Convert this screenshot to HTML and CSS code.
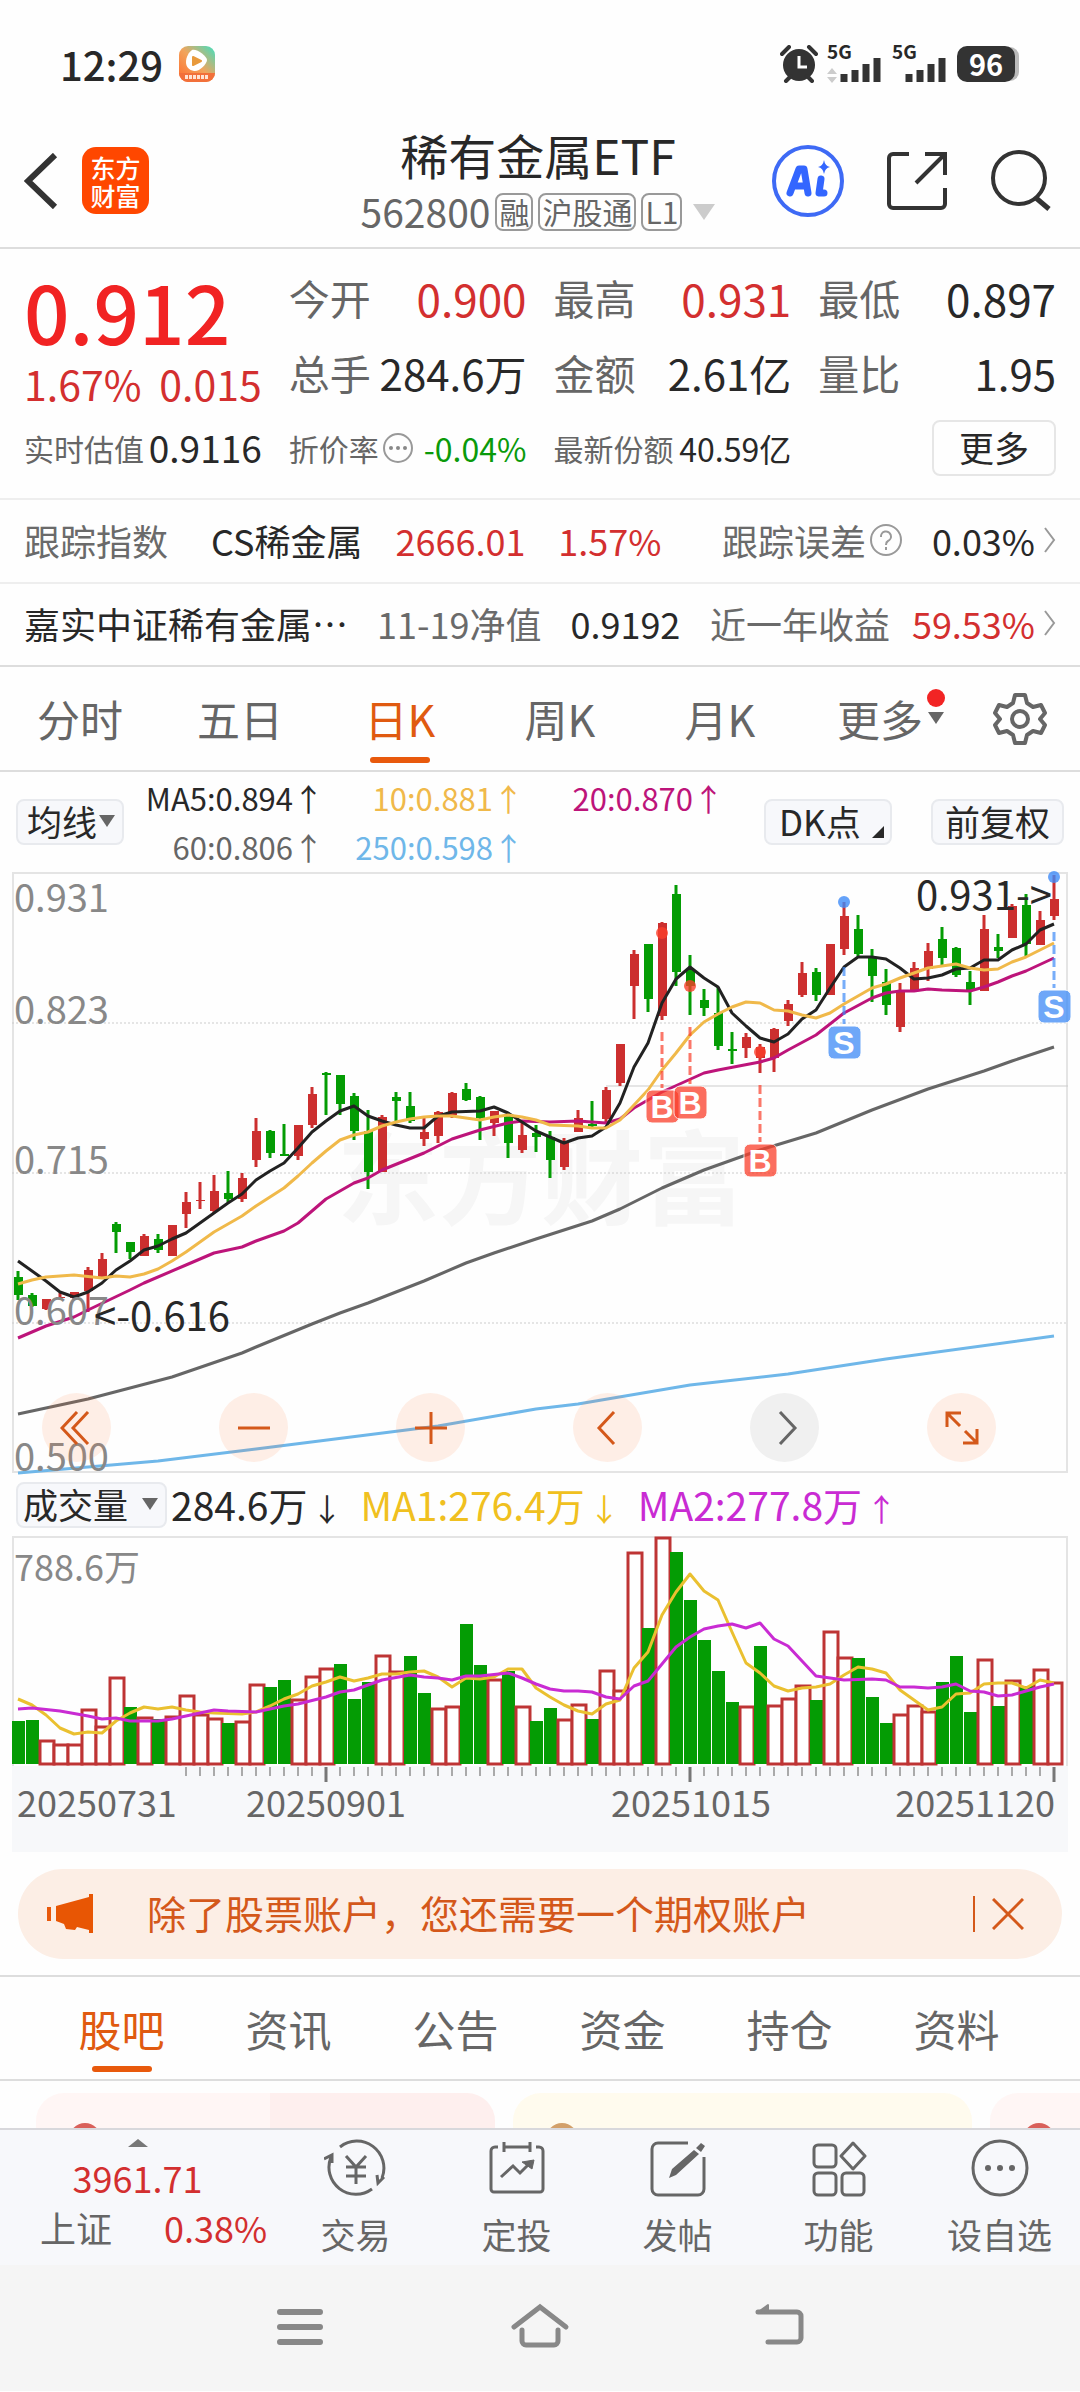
FILE: index.html
```html
<!DOCTYPE html>
<html lang="zh-CN">
<head>
    <meta charset="UTF-8">
    <meta name="viewport" content="width=device-width, initial-scale=1.0">
    <title>稀有金属ETF 562800</title>
    <link rel="stylesheet" href="styles.css">
</head>
<body>

<div class="status-bar">
    <div class="status-left">
        <span class="clock">12:29</span>
        <svg class="status-app" width="36" height="36" viewBox="0 0 36 36">
            <defs>
                <linearGradient id="appBg" x1="0" y1="1" x2="1" y2="0">
                    <stop offset="0" stop-color="#ff6a2b"/>
                    <stop offset="0.5" stop-color="#f2a45c"/>
                    <stop offset="1" stop-color="#3fe0c0"/>
                </linearGradient>
            </defs>
            <rect width="36" height="36" rx="9" fill="url(#appBg)"/>
            <path d="M0 27h36a9 9 0 0 1-9 9H9a9 9 0 0 1-9-9z" fill="#f2703a"/>
            <path d="M13 4c4-2 15 6 15 10s-8 12-13 11-8-4-8-9 3-10 6-12z" fill="#fff"/>
            <path d="M14 11l8 4-8 4z" fill="#e89a3c" stroke="#e89a3c" stroke-width="2" stroke-linejoin="round"/>
            <path d="M6 31h24" stroke="#ffe3d3" stroke-width="4" stroke-dasharray="3 1"/>
        </svg>
    </div>
    <div class="status-right">
        <svg width="38" height="38" viewBox="0 0 38 38">
            <circle cx="19" cy="20" r="16" fill="#333"/>
            <path d="M2 9l7-7M36 9l-7-7M6 36l5-5M32 36l-5-5" stroke="#333" stroke-width="4" stroke-linecap="round"/>
            <path d="M19 11v11h8" stroke="#fff" stroke-width="3" fill="none"/>
        </svg>
        <div class="signal">
            <span class="net">5G</span>
            <svg width="56" height="38" viewBox="0 0 56 38">
                <path d="M0 29l5-6 5 6zM0 32l5 6 5-6z" fill="#ccc"/>
                <path d="M17 37v-8M28 37v-12M39 37v-18M50 37v-24" stroke="#333" stroke-width="7"/>
            </svg>
        </div>
        <div class="signal">
            <span class="net">5G</span>
            <svg width="56" height="38" viewBox="0 0 56 38">
                <path d="M17 37v-8M28 37v-12M39 37v-18M50 37v-24" stroke="#333" stroke-width="7"/>
            </svg>
        </div>
        <span class="battery">96</span>
    </div>
</div>

<header class="header">
    <div class="header-side">
        <button class="icon-btn" aria-label="返回">
            <svg width="34" height="56" viewBox="0 0 34 56"><path d="M31 2L4 28l27 26" fill="none" stroke="#333" stroke-width="6"/></svg>
        </button>
        <a class="brand" href="#"><span>东方</span><span>财富</span></a>
    </div>
    <div class="header-title">
        <h1>稀有金属ETF</h1>
        <div class="sub">
            <span class="code">562800</span>
            <span class="tag">融</span>
            <span class="tag">沪股通</span>
            <span class="tag">L1</span>
            <svg width="22" height="16" viewBox="0 0 22 16"><path d="M0 0h22L11 16z" fill="#ccc"/></svg>
        </div>
    </div>
    <div class="header-side header-tools">
        <button class="icon-btn" aria-label="AI">
            <svg width="72" height="72" viewBox="0 0 72 72">
                <circle cx="36" cy="36" r="34" fill="#fff" stroke="#3e6af5" stroke-width="4"/>
                <path d="M18 48l9-24h5l4 24M22 41h12" fill="none" stroke="#3366ff" stroke-width="7" stroke-linejoin="round" stroke-linecap="round"/>
                <path d="M49 34l-2 14h5" fill="none" stroke="#3366ff" stroke-width="7" stroke-linecap="round" stroke-linejoin="round"/>
                <path d="M52 15q1 6 6 7-5 1-6 7-1-6-6-7 5-1 6-7z" fill="#3366ff"/>
            </svg>
        </button>
        <button class="icon-btn" aria-label="分享">
            <svg width="60" height="60" viewBox="0 0 60 60">
                <path d="M22 3H6a4 4 0 0 0-4 4v46a4 4 0 0 0 4 4h48a4 4 0 0 0 4-4V37" fill="none" stroke="#333" stroke-width="4"/>
                <path d="M29 32L57 4M38 3h20v21" fill="none" stroke="#333" stroke-width="4"/>
            </svg>
        </button>
        <button class="icon-btn" aria-label="搜索">
            <svg width="62" height="62" viewBox="0 0 62 62">
                <circle cx="29" cy="28" r="26" fill="none" stroke="#333" stroke-width="4"/>
                <path d="M46 48l13 11" stroke="#333" stroke-width="5"/>
            </svg>
        </button>
    </div>
</header>

<section class="quote">
    <div class="price-box">
        <div class="price">0.912</div>
        <div class="change"><span>1.67%</span><span>0.015</span></div>
    </div>
    <div class="cell"><span class="label">今开</span><span class="value up">0.900</span></div>
    <div class="cell"><span class="label">最高</span><span class="value up">0.931</span></div>
    <div class="cell"><span class="label">最低</span><span class="value">0.897</span></div>
    <div class="cell"><span class="label">总手</span><span class="value mid">284.6万</span></div>
    <div class="cell"><span class="label">金额</span><span class="value mid">2.61亿</span></div>
    <div class="cell"><span class="label">量比</span><span class="value mid">1.95</span></div>
    <div class="cell small"><span class="label">实时估值</span><span class="value big">0.9116</span></div>
    <div class="cell small">
        <span class="label rate">折价率
            <svg width="32" height="32" viewBox="0 0 32 32">
                <circle cx="16" cy="16" r="14" fill="none" stroke="#999" stroke-width="2"/>
                <circle cx="9" cy="16" r="2" fill="#888"/><circle cx="16" cy="16" r="2" fill="#888"/><circle cx="23" cy="16" r="2" fill="#888"/>
            </svg>
        </span>
        <span class="value down">-0.04%</span>
    </div>
    <div class="cell small"><span class="label">最新份额</span><span class="value">40.59亿</span></div>
    <div class="cell more"><button class="more-btn">更多</button></div>
</section>

<a class="info-row" href="#">
    <span class="muted name">跟踪指数</span>
    <span>CS稀金属</span>
    <span class="up">2666.01</span>
    <span class="up">1.57%</span>
    <span class="muted push">跟踪误差</span>
    <svg class="help" width="34" height="34" viewBox="0 0 34 34">
        <circle cx="17" cy="17" r="15" fill="none" stroke="#999" stroke-width="2"/>
        <path d="M12 14a5 5 0 1 1 7 4q-2 1-2 4M17 24v3" fill="none" stroke="#999" stroke-width="2"/>
    </svg>
    <span class="last">0.03%</span>
    <svg class="chev" width="12" height="26" viewBox="0 0 12 26"><path d="M1 1l9 12-9 12" fill="none" stroke="#999" stroke-width="2"/></svg>
</a>
<a class="info-row fund" href="#">
    <span>嘉实中证稀有金属⋯</span>
    <span class="muted">11-19净值</span>
    <span>0.9192</span>
    <span class="muted push">近一年收益</span>
    <span class="up last">59.53%</span>
    <svg class="chev" width="12" height="26" viewBox="0 0 12 26"><path d="M1 1l9 12-9 12" fill="none" stroke="#999" stroke-width="2"/></svg>
</a>

<nav class="period-tabs">
    <button class="tab">分时</button>
    <button class="tab">五日</button>
    <button class="tab active">日K</button>
    <button class="tab">周K</button>
    <button class="tab">月K</button>
    <button class="tab">更多<span class="dot"></span><span class="caret"></span></button>
    <button class="tab gear" aria-label="设置">
        <svg width="54" height="54" viewBox="0 0 54 54">
            <path d="M22 3h10l2 8 6 4 8-2 4 8-5 6 5 6-4 8-8-2-6 4-2 8H22l-2-8-6-4-8 2-4-8 5-6-5-6 4-8 8 2 6-4z" fill="none" stroke="#666" stroke-width="4" stroke-linejoin="round"/>
            <circle cx="27" cy="27" r="8" fill="none" stroke="#666" stroke-width="4"/>
        </svg>
    </button>
</nav>

<div class="ma-bar">
    <button class="chip">均线<span class="caret"></span></button>
    <div class="ma-list">
        <span class="ma5">MA5:0.894↑</span>
        <span class="ma10">10:0.881↑</span>
        <span class="ma20">20:0.870↑</span>
        <span class="ma60">60:0.806↑</span>
        <span class="ma250">250:0.598↑</span>
    </div>
    <button class="chip dk">DK点<span class="corner"></span></button>
    <button class="chip adjust">前复权</button>
</div>

<div class="kline">
    <svg id="kline" viewBox="0 0 1056 600"></svg>
    <div class="kline-tools">
        <button class="round" aria-label="最早">
            <svg width="34" height="34" viewBox="0 0 34 34"><path d="M17 1L2 17l15 16M28 1L13 17l15 16" fill="none" stroke="#d4581a" stroke-width="3"/></svg>
        </button>
        <button class="round" aria-label="缩小">
            <svg width="34" height="34" viewBox="0 0 34 34"><path d="M1 17h32" stroke="#d4581a" stroke-width="3"/></svg>
        </button>
        <button class="round" aria-label="放大">
            <svg width="34" height="34" viewBox="0 0 34 34"><path d="M1 17h32M17 1v32" stroke="#d4581a" stroke-width="3"/></svg>
        </button>
        <button class="round" aria-label="左移">
            <svg width="34" height="34" viewBox="0 0 34 34"><path d="M23 1L8 17l15 16" fill="none" stroke="#d4581a" stroke-width="3"/></svg>
        </button>
        <button class="round grey" aria-label="右移">
            <svg width="34" height="34" viewBox="0 0 34 34"><path d="M12 1l15 16-15 16" fill="none" stroke="#666" stroke-width="3"/></svg>
        </button>
        <button class="round" aria-label="全屏">
            <svg width="34" height="34" viewBox="0 0 34 34"><path d="M2 16V2h14M2 2l13 13M32 18v14H18M32 32L20 20" fill="none" stroke="#d4581a" stroke-width="3"/></svg>
        </button>
    </div>
</div>

<div class="vol-bar">
    <button class="chip">成交量<span class="caret"></span></button>
    <span class="vol-now">284.6万<span class="arrow">↓</span></span>
    <span class="vol-ma1">MA1:276.4万<span class="arrow">↓</span></span>
    <span class="vol-ma2">MA2:277.8万<span class="arrow">↑</span></span>
</div>

<div class="volume">
    <svg id="volume" viewBox="0 0 1056 316"></svg>
</div>

<div class="notice">
    <svg width="48" height="40" viewBox="0 0 48 40">
        <path d="M2 13v14" stroke="#e8590c" stroke-width="4"/>
        <path d="M9 12L42 3V0h4v39h-4v-3l-12-3-2 3-9-1-2-5-8-3z" fill="#e85604"/>
    </svg>
    <a class="notice-text" href="#">除了股票账户，您还需要一个期权账户</a>
    <button class="close" aria-label="关闭">
        <svg width="32" height="32" viewBox="0 0 32 32"><path d="M1 1l30 30M31 1L1 31" stroke="#d4581a" stroke-width="3"/></svg>
    </button>
</div>

<nav class="section-tabs">
    <button class="tab active">股吧</button>
    <button class="tab">资讯</button>
    <button class="tab">公告</button>
    <button class="tab">资金</button>
    <button class="tab">持仓</button>
    <button class="tab">资料</button>
</nav>

<div class="cards">
    <div class="card pink"><i class="medal red"></i><b>大有机会</b></div>
    <div class="card cream"><i class="medal gold"></i><b>上市公司</b></div>
    <div class="card pale"><i class="medal red"></i></div>
</div>

<footer class="bottom-bar">
    <a class="market" href="#">
        <svg width="20" height="8" viewBox="0 0 20 8"><path d="M0 8L10 0l10 8z" fill="#777"/></svg>
        <span class="up">3961.71</span>
        <span class="market-row"><span>上证</span><span class="up">0.38%</span></span>
    </a>
    <a class="action" href="#">
        <svg width="64" height="58" viewBox="0 0 64 58" fill="none" stroke="#666" stroke-width="3">
            <path d="M16 8a27 27 0 0 1 42 31M60 38l-6 6-1-8M48 50A27 27 0 0 1 7 18M0 20l8-4v8"/>
            <path d="M22 17l10 11 10-11M22 28h20M22 37h20M32 28v17"/>
        </svg>
        <span>交易</span>
    </a>
    <a class="action" href="#">
        <svg width="56" height="58" viewBox="0 0 56 58" fill="none" stroke="#666" stroke-width="3">
            <path d="M9 8H6a4 4 0 0 0-4 4v38a3 3 0 0 0 3 3h46a3 3 0 0 0 3-3V12a4 4 0 0 0-4-4h-3M15 3v10M41 3v10M15 8h26"/>
            <path d="M12 38l12-11 7 7 12-12"/>
            <path d="M33 23l12-2-2 9z" fill="#666" stroke-width="1"/>
        </svg>
        <span>定投</span>
    </a>
    <a class="action" href="#">
        <svg width="56" height="58" viewBox="0 0 56 58" fill="none" stroke="#666" stroke-width="3">
            <path d="M38 4H8a6 6 0 0 0-6 6v40a6 6 0 0 0 6 6h40a6 6 0 0 0 6-6V18"/>
            <path d="M19 39l3-9L44 11l5 4-23 21zM46 9l5-5 4 3-4 6z" fill="#666" stroke="none"/>
        </svg>
        <span>发帖</span>
    </a>
    <a class="action" href="#">
        <svg width="56" height="58" viewBox="0 0 56 58" fill="none" stroke="#666" stroke-width="3">
            <rect x="3" y="6" width="22" height="22" rx="4"/>
            <rect x="3" y="34" width="22" height="22" rx="4"/>
            <rect x="31" y="34" width="22" height="22" rx="4"/>
            <path d="M42 4l12 13-12 13-12-13z" stroke-linejoin="round"/>
        </svg>
        <span>功能</span>
    </a>
    <a class="action" href="#">
        <svg width="58" height="58" viewBox="0 0 58 58">
            <circle cx="29" cy="29" r="27" fill="none" stroke="#666" stroke-width="3"/>
            <circle cx="17" cy="29" r="3" fill="#666"/><circle cx="29" cy="29" r="3" fill="#666"/><circle cx="41" cy="29" r="3" fill="#666"/>
        </svg>
        <span>设自选</span>
    </a>
</footer>

<div class="system-nav">
    <button class="icon-btn" aria-label="菜单">
        <svg width="60" height="48" viewBox="0 0 60 48"><path d="M10 9h40M10 24h40M10 39h40" stroke="#888" stroke-width="6" stroke-linecap="round"/></svg>
    </button>
    <button class="icon-btn" aria-label="主页">
        <svg width="60" height="48" viewBox="0 0 60 48"><path d="M4 24L30 4l26 20M12 27v11a4 4 0 0 0 4 4h28a4 4 0 0 0 4-4V27" fill="none" stroke="#888" stroke-width="5" stroke-linecap="round"/></svg>
    </button>
    <button class="icon-btn" aria-label="返回上级">
        <svg width="60" height="48" viewBox="0 0 60 48"><path d="M8 9h39a4 4 0 0 1 4 4v22a4 4 0 0 1-4 4H18" fill="none" stroke="#888" stroke-width="5" stroke-linecap="round"/><path d="M7 10l11-8v7z" fill="#888" stroke="#888" stroke-width="2" stroke-linejoin="round"/></svg>
    </button>
</div>

<script src="chart.js"></script>
</body>
</html>
```
FILE: styles.css
```css
* {
    box-sizing: border-box;
}
body {
    margin: 0;
    background-color: #fefefe;
    color: #282828;
    font-family: "Noto Sans CJK SC", sans-serif;
    font-size: 36px;
    line-height: 1;
}
button {
    margin: 0;
    padding: 0;
    border: none;
    background: none;
    font: inherit;
    color: inherit;
}
a {
    color: inherit;
    text-decoration: none;
}
svg {
    display: block;
    flex: none;
}
.up {
    color: #d32f2f;
}
.down {
    color: #0a9a0a;
}
.muted {
    color: #6a6a6a;
}

/* status bar */
.status-bar {
    display: flex;
    justify-content: space-between;
    align-items: center;
    height: 114px;
    padding: 14px 65px 0 60px;
}
.status-left,
.status-right {
    display: flex;
    align-items: center;
}
.status-left {
    gap: 16px;
}
.clock {
    font-size: 40px;
    font-weight: 500;
}
.status-right {
    gap: 9px;
}
.signal {
    position: relative;
}
.net {
    position: absolute;
    top: -4px;
    left: 0;
    font-size: 19px;
    font-weight: bold;
}
.battery {
    width: 58px;
    height: 36px;
    border-radius: 10px;
    background-color: #333;
    box-shadow: 5px 0 0 -1px #bbb;
    color: #fff;
    font-size: 29px;
    font-weight: bold;
    line-height: 34px;
    text-align: center;
}

/* header */
.header {
    display: grid;
    grid-template-columns: 1fr auto 1fr;
    align-items: center;
    height: 135px;
    padding: 0 28px 0 24px;
    border-bottom: 2px solid #ddd;
}
.header-side {
    display: flex;
    align-items: center;
    gap: 24px;
}
.header-tools {
    justify-content: flex-end;
    gap: 43px;
}
.brand {
    display: flex;
    flex-direction: column;
    justify-content: center;
    align-items: center;
    width: 67px;
    height: 67px;
    border-radius: 14px;
    background-color: #ff4700;
    color: #fff;
    font-size: 25px;
    font-weight: 500;
    line-height: 28px;
}
.header-title {
    display: flex;
    flex-direction: column;
    align-items: center;
    gap: 14px;
}
h1 {
    margin: 0;
    font-size: 48px;
    font-weight: normal;
}
.sub {
    display: flex;
    align-items: center;
    gap: 5px;
    color: #666;
}
.code {
    font-size: 39px;
}
.tag {
    padding: 1px 2px 3px;
    border: 2px solid #999;
    border-radius: 8px;
    font-size: 30px;
}
.sub svg {
    margin-left: 6px;
}

/* quote */
.quote {
    display: grid;
    grid-template-columns: repeat(4, 1fr);
    grid-template-rows: 75px 75px 75px;
    column-gap: 27px;
    height: 251px;
    padding: 11px 24px 0;
    border-bottom: 2px solid #eee;
}
.price-box {
    grid-row: span 2;
    display: flex;
    flex-direction: column;
    justify-content: space-between;
    padding: 10px 0 6px;
}
.price {
    color: #f12323;
    font-size: 80px;
    font-weight: 500;
}
.change {
    display: flex;
    justify-content: space-between;
    color: #d32f2f;
    font-size: 41px;
}
.cell {
    display: flex;
    justify-content: space-between;
    align-items: center;
    white-space: nowrap;
}
.label {
    color: #666;
    font-size: 41px;
}
.value {
    font-size: 44px;
}
.value.mid {
    font-size: 42px;
}
.small .label {
    font-size: 30px;
}
.small .value {
    font-size: 32px;
}
.small .value.big {
    font-size: 37px;
}
.rate {
    display: flex;
    align-items: center;
    gap: 3px;
}
.cell.more {
    justify-content: flex-end;
}
.more-btn {
    width: 124px;
    height: 56px;
    padding-bottom: 2px;
    border: 2px solid #e6e6e6;
    border-radius: 8px;
    font-size: 35px;
}

/* index rows */
.info-row {
    display: flex;
    align-items: center;
    gap: 33px;
    height: 84px;
    padding: 0 24px 3px;
    border-bottom: 2px solid #eee;
    white-space: nowrap;
}
.info-row .name {
    margin-right: 10px;
}
.push {
    margin-left: auto;
}
.help {
    margin-left: -30px;
}
.last {
    margin-left: -4px;
}
.chev {
    margin-left: -24px;
}
.info-row.fund {
    gap: 29px;
    height: 83px;
    border-bottom-color: #ddd;
}
.fund .last {
    margin-left: -7px;
}
.fund .chev {
    margin-left: -20px;
}

/* tabs */
.period-tabs,
.section-tabs {
    display: flex;
    border-bottom: 2px solid #ddd;
    color: #666;
}
.period-tabs {
    height: 105px;
}
.tab {
    position: relative;
    flex: 4;
    font-size: 43px;
}
.tab.gear {
    flex: 3;
    display: flex;
    justify-content: center;
    align-items: center;
}
.tab.active {
    color: #e05a10;
}
.tab.active::after {
    content: "";
    position: absolute;
    bottom: 7px;
    left: calc(50% - 30px);
    width: 60px;
    height: 6px;
    border-radius: 3px;
    background-color: #e8590c;
}
.tab .dot {
    position: absolute;
    top: 22px;
    right: 15px;
    width: 18px;
    height: 18px;
    border-radius: 50%;
    background-color: #f22424;
}
.tab .caret {
    position: absolute;
    top: 45px;
    right: 16px;
}
.caret {
    width: 0;
    height: 0;
    border: 8px solid transparent;
    border-top: 12px solid #666;
    border-bottom: 0;
}

/* moving averages */
.ma-bar {
    display: flex;
    align-items: center;
    height: 101px;
    padding: 0 16px 2px;
}
.chip {
    display: flex;
    align-items: center;
    gap: 2px;
    height: 46px;
    padding: 0 7px 2px 9px;
    border: 2px solid #e8eaee;
    border-radius: 8px;
    background-color: #f7f8fb;
    font-size: 35px;
    white-space: nowrap;
}
.chip.dk {
    position: relative;
    width: 128px;
    margin: 0 39px 0 auto;
    padding-left: 13px;
}
.chip.adjust {
    padding: 0 12px 2px;
}
.corner {
    position: absolute;
    right: 6px;
    bottom: 5px;
    border-left: 12px solid transparent;
    border-bottom: 12px solid #282828;
}
.ma-list {
    display: grid;
    grid-template-columns: repeat(3, 200px);
    row-gap: 18px;
    font-size: 31px;
    text-align: right;
}
.ma10 {
    color: #f0b94a;
}
.ma20 {
    color: #bd147a;
}
.ma60 {
    color: #666;
}
.ma250 {
    color: #6fb7e9;
}

/* k line */
.kline {
    position: relative;
    margin: 0 12px;
}
#kline,
#volume {
    width: 100%;
    overflow: visible;
}
.kline-tools {
    position: absolute;
    right: 72px;
    bottom: 11px;
    left: 30px;
    display: flex;
    justify-content: space-between;
}
.round {
    display: flex;
    justify-content: center;
    align-items: center;
    width: 69px;
    height: 69px;
    border-radius: 50%;
    background-color: rgba(255, 122, 60, 0.12);
}
.round.grey {
    background-color: rgba(120, 120, 120, 0.1);
}
.axis-text {
    fill: #888;
    font-size: 38px;
}
.volume .axis-text {
    font-size: 36px;
}
.mark-text {
    fill: #282828;
    font-size: 40px;
}
.date-text {
    fill: #666;
    font-size: 36px;
}
.watermark {
    fill: #f6f6f6;
    font-size: 102px;
    font-weight: bold;
}
.badge-text {
    fill: #fff;
    font-family: "Liberation Sans", sans-serif;
    font-size: 32px;
    font-weight: bold;
    text-anchor: middle;
}

/* volume */
.vol-bar {
    display: flex;
    align-items: center;
    height: 63px;
    padding: 0 16px;
    font-size: 39px;
    white-space: nowrap;
}
.vol-bar .chip {
    gap: 14px;
    margin-right: 4px;
    padding: 0 7px 2px 5px;
}
.arrow {
    margin: 0 4px;
    font-size: 31px;
}
.vol-ma1 {
    margin: 0 14px;
    color: #f0c020;
}
.vol-ma2 {
    color: #c92bd3;
}
.volume {
    margin: 0 12px;
}

/* notice */
.notice {
    display: flex;
    align-items: center;
    height: 90px;
    margin: 17px 18px 16px;
    padding: 0 38px 0 29px;
    border-radius: 45px;
    background-color: #fceee5;
    color: #d4581a;
}
.notice-text {
    flex: 1;
    margin-left: 52px;
    padding-bottom: 3px;
    font-size: 39px;
}
.close {
    padding: 2px 0 2px 17px;
    border-left: 2px solid #d4581a;
}

/* section tabs */
.section-tabs {
    height: 106px;
    padding: 0 40px 0 38px;
    border-top: 2px solid #ddd;
}

/* cards */
.cards {
    display: grid;
    grid-template-columns: 459px 459px 459px;
    gap: 18px;
    height: 47px;
    padding: 12px 36px 0;
    overflow: hidden;
}
.card {
    display: flex;
    align-items: flex-start;
    height: 120px;
    border-radius: 28px;
    padding: 30px 33px;
}
.card b {
    margin: 3px 0 0 30px;
    font-size: 36px;
}
.card.pink {
    background-image: linear-gradient(90deg, #fff6f5 51%, #feefee 51%);
}
.card.pink b {
    margin-left: 106px;
}
.card.cream {
    background-color: #fffbee;
}
.card.pale {
    background-color: #fff6f5;
}
.medal {
    width: 32px;
    height: 32px;
    border-radius: 50%;
}
.medal.red {
    background-color: #d9605a;
}
.medal.gold {
    background-color: #d2a06a;
}

/* bottom bar */
.bottom-bar {
    display: flex;
    height: 137px;
    border-top: 2px solid #d8d8dc;
    background-color: #f7f8fb;
    color: #666;
}
.market {
    display: flex;
    flex: 275;
    flex-direction: column;
    align-items: center;
    padding-top: 9px;
}
.market > .up {
    margin: 12px 0 14px;
}
.market-row {
    display: flex;
    gap: 52px;
    padding-left: 32px;
}
.action {
    display: flex;
    flex: 161;
    flex-direction: column;
    align-items: center;
    gap: 19px;
    padding-top: 9px;
    font-size: 35px;
}

/* system navigation */
.system-nav {
    display: flex;
    justify-content: center;
    gap: 180px;
    height: 126px;
    padding-top: 38px;
    background-color: #f5f5f5;
}
.icon-btn {
    display: block;
    height: max-content;
}
```
FILE: chart.js
```js
const RED = '#cc2f2f';
const GREEN = '#049c04';

// colour, high, body top, body bottom, low
const candles = [
    ['g', 398, 404, 422, 427], ['g', 420, 422, 433, 434], ['r', 426, 426, 436, 437], ['r', 420, 424, 425, 427], ['r', 419, 419, 425, 427],
    ['r', 394, 397, 418, 439], ['r', 380, 386, 404, 404], ['g', 349, 351, 359, 380], ['g', 369, 369, 379, 386], ['r', 361, 363, 383, 383],
    ['g', 361, 366, 377, 380], ['r', 352, 352, 383, 383], ['r', 319, 329, 341, 355], ['r', 309, 327, 328, 336], ['r', 302, 318, 338, 340],
    ['g', 298, 320, 326, 329], ['r', 300, 305, 326, 329], ['r', 245, 258, 287, 294], ['g', 257, 258, 280, 285], ['g', 251, 281, 283, 283],
    ['r', 252, 252, 283, 287], ['r', 214, 221, 252, 255], ['g', 199, 200, 202, 242], ['g', 202, 202, 231, 242], ['g', 220, 223, 258, 267],
    ['g', 237, 258, 299, 316], ['r', 242, 244, 299, 299], ['g', 219, 224, 228, 250], ['g', 219, 233, 248, 250], ['r', 244, 259, 266, 273],
    ['r', 238, 239, 263, 270], ['r', 219, 220, 242, 245], ['g', 210, 216, 227, 228], ['g', 223, 224, 245, 267], ['r', 238, 238, 250, 263],
    ['g', 239, 242, 270, 285], ['r', 249, 262, 277, 280], ['g', 252, 260, 264, 279], ['g', 258, 264, 287, 305], ['r', 265, 270, 294, 297],
    ['r', 237, 245, 259, 259], ['g', 228, 251, 253, 254], ['r', 214, 217, 246, 249], ['r', 171, 171, 210, 213], ['r', 77, 81, 113, 146],
    ['g', 71, 71, 126, 139], ['r', 49, 50, 143, 147], ['g', 12, 21, 99, 113], ['g', 82, 96, 113, 142], ['g', 116, 127, 135, 143],
    ['g', 114, 140, 173, 177], ['g', 159, 176, 178, 191], ['r', 160, 164, 175, 185], ['r', 171, 174, 185, 200], ['r', 155, 156, 185, 199],
    ['r', 127, 131, 148, 153], ['r', 89, 100, 122, 124], ['g', 95, 99, 122, 128], ['r', 71, 71, 122, 122], ['r', 29, 43, 76, 82],
    ['g', 42, 56, 81, 83], ['g', 76, 84, 103, 129], ['g', 96, 109, 132, 142], ['r', 110, 118, 154, 159], ['r', 89, 95, 118, 118],
    ['r', 70, 78, 96, 108], ['g', 54, 66, 85, 92], ['g', 74, 75, 102, 104], ['g', 98, 109, 118, 132], ['r', 42, 56, 118, 118],
    ['g', 61, 74, 78, 85], ['r', 31, 33, 65, 65], ['g', 21, 32, 71, 84], ['r', 38, 47, 72, 72], ['r', 2, 26, 43, 47]
];

// moving averages as day:y pairs
const lines = [
    ['#6fb7e9', '0:600 10:588 17:576 30:553 37:536 40:531 48:512 55:501 62:486 74:463'],
    ['#666', '0:541 5:526 11:504 16:480 17:474 21:451 23:440 25:430 29:408 32:390 34:380 37:366 41:348 43:336 46:315 49:297 53:277 57:260 61:237 65:216 69:198 71:188 74:174'],
    ['#bd147a', '0:465 2:453 4:444 5:437 8:417 9:410 12:392 14:380 16:374 17:368 19:358 20:350 21:338 22:326 24:310 25:305 26:297 29:280 31:266 33:257 35:250 36:248 38:249 40:248 42:250 43:246 44:235 46:219 49:200 50:197 53:189 54:185 55:177 57:162 59:140 61:125 62:120 63:118 64:118 65:116 66:117 68:118 69:114 70:109 71:103 72:98 74:85'],
    ['#222', '0:388 2:408 3:419 4:424 5:419 6:410 7:397 8:388 9:377 10:373 11:366 12:360 13:350 14:340 15:330 16:321 17:307 18:298 19:290 20:275 21:259 22:248 23:238 24:233 25:243 26:248 27:252 28:255 29:255 30:243 31:239 33:238 34:234 35:240 36:249 37:258 38:264 39:270 40:265 41:263 42:254 43:230 44:194 45:170 46:130 47:106 48:94 49:105 50:114 51:140 52:153 53:165 54:169 55:161 56:146 57:137 58:115 59:94 60:84 61:84 62:86 63:95 64:106 65:105 66:102 67:96 68:95 69:87 70:87 71:77 72:71 73:57 74:51'],
    ['#f0b94a', '0:411 1:407 2:404 4:402 6:405 7:403 8:404 9:401 10:396 11:388 12:379 13:369 14:359 15:351 16:343 17:333 18:324 19:315 20:303 21:290 22:278 23:267 24:262 25:259 26:253 27:249 28:246 29:244 30:243 31:243 32:245 33:247 34:244 35:242 36:244 37:247 38:252 40:253 41:255 42:255 43:247 44:232 45:217 46:197 47:180 48:162 49:149 50:141 51:134 52:129 53:130 54:137 55:138 56:142 57:145 58:140 59:131 60:123 61:115 62:111 63:105 64:100 65:95 66:93 67:91 68:95 69:97 70:96 71:89 72:84 73:77 74:70']
];

// trade points: letter, day, circle y, dash start, badge top
const trades = [
    ['B', 46, 60, 159, 217],
    ['B', 48, 113, 154, 213],
    ['B', 53, 179, 212, 271],
    ['S', 59, 29, 94, 153],
    ['S', 74, 4, 59, 117]
];

const volumes = [
    43, 44, 24, 20, 20, 55, 38, 87, 57, 47, 45, 48, 69, 50, 46, 41, 43, 80, 77, 84, 65, 88, 96, 100, 65,
    82, 109, 93, 108, 71, 56, 58, 140, 99, 85, 93, 58, 43, 56, 45, 60, 45, 94, 74, 212, 136, 227, 212, 164, 124,
    93, 62, 58, 118, 59, 66, 79, 64, 133, 107, 106, 67, 41, 50, 59, 53, 82, 108, 52, 105, 58, 84, 78, 95, 82
];

// r = hollow bar (day closed above the previous close), g = solid bar
const volumeColors = 'ggrrrrrrgrgrrrrgrrggrrrgggrrggrrggrgrg' + 'grrgrrrgrgggggrgrrrgrrgggrrrgggrgrgrr';

const volumeLines = [
    ['#eac030', '0:163 1:169 2:179 3:192 4:198 5:196 6:197 7:185 8:177 9:171 10:173 11:171 12:174 13:176 14:177 16:178 17:176 18:170 19:163 20:158 21:150 22:146 23:141 24:145 25:142 26:138 27:138 28:136 29:135 30:141 31:151 32:142 33:143 34:141 35:133 36:133 37:152 38:161 39:169 40:175 41:178 42:168 43:164 44:132 45:116 46:79 47:56 48:38 49:55 50:64 51:96 52:127 53:137 54:150 55:155 56:152 57:151 58:148 59:139 60:131 61:133 62:137 63:154 64:164 65:174 66:171 67:158 68:157 69:148 70:147 71:147 72:152 73:144 74:147'],
    ['#c92bd3', '0:173 1:172 3:175 5:180 6:183 7:182 8:185 10:185 11:183 12:180 14:174 15:175 17:176 19:170 20:168 22:161 23:156 24:154 25:149 26:144 28:139 29:141 30:142 31:144 32:140 33:140 35:137 36:142 37:148 38:153 39:155 40:155 41:156 42:161 43:163 44:150 45:145 46:128 47:111 48:101 49:93 50:90 51:88 52:92 53:87 54:103 55:110 57:140 58:142 59:144 61:143 62:144 63:151 64:151 65:152 66:151 67:148 68:155 69:156 70:160 71:159 73:151 74:148']
];

function dayX(i) {
    return 6 + i * 14;
}

function polyline(color, text) {
    const points = text.split(' ').map(pair => {
        const [day, y] = pair.split(':').map(Number);
        return `${dayX(day)},${y}`;
    });
    return `<polyline points="${points.join(' ')}" fill="none" stroke="${color}" stroke-width="3" stroke-linejoin="round"/>`;
}

function drawKline() {
    let svg = '<text class="watermark" x="325" y="344">东方财富</text>';
    svg += '<rect x="1" y="0" width="1054" height="599" fill="none" stroke="#e4e4e4" stroke-width="2"/>';

    [150, 300, 450].forEach(y => {
        svg += `<path d="M0 ${y}H1056" stroke="#ccc" stroke-dasharray="2 2"/>`;
    });
    svg += '<path d="M594 213H1056" stroke="#ccc"/>';

    candles.forEach(([c, high, top, bottom, low], i) => {
        const x = dayX(i);
        const color = c === 'r' ? RED : GREEN;
        svg += `<path d="M${x} ${high}V${low}" stroke="${color}" stroke-width="3"/>`;
        svg += `<rect x="${x - 4}" y="${top}" width="9" height="${Math.max(bottom - top, 1)}" fill="${color}"/>`;
    });

    lines.forEach(([color, text]) => {
        svg += polyline(color, text);
    });

    trades.forEach(([letter, day, cy, dash, top]) => {
        const x = dayX(day);
        const color = letter === 'B' ? '#fa3f2b' : '#3e8bf7';
        svg += `<circle cx="${x}" cy="${cy}" r="6" fill="${color}" opacity="0.8"/>`;
        svg += `<path d="M${x} ${dash}V${top - 2}" stroke="${color}" stroke-width="3" stroke-dasharray="9 4" opacity="0.7"/>`;
        svg += `<rect x="${x - 16}" y="${top}" width="33" height="33" rx="6" fill="${color}" stroke="#fff" opacity="0.75"/>`;
        svg += `<text class="badge-text" x="${x}" y="${top + 28}">${letter}</text>`;
    });

    svg += '<text class="axis-text" x="2" y="39">0.931</text>';
    svg += '<text class="axis-text" x="2" y="151">0.823</text>';
    svg += '<text class="axis-text" x="2" y="301">0.715</text>';
    svg += '<text class="axis-text" x="2" y="452">0.607</text>';
    svg += '<text class="axis-text" x="2" y="598">0.500</text>';
    svg += '<text class="mark-text" x="82" y="458">&lt;-0.616</text>';
    svg += '<text class="mark-text" x="1040" y="37" text-anchor="end">0.931-&gt;</text>';
    document.getElementById('kline').innerHTML = svg;
}

function drawVolume() {
    let svg = '<rect x="0" y="230" width="1056" height="86" fill="#f7f8fa"/>';
    svg += '<path d="M1 230V1H1055V230" fill="none" stroke="#e4e4e4" stroke-width="2"/>';
    svg += '<text class="axis-text" x="2" y="45">788.6万</text>';

    volumes.forEach((h, i) => {
        const x = dayX(i);
        if (volumeColors[i] === 'r') {
            svg += `<rect x="${x - 6}" y="${229 - h}" width="14" height="${h - 1}" fill="#fff" stroke="#be3434" stroke-width="3"/>`;
        } else {
            svg += `<rect x="${x - 6}" y="${228 - h}" width="13" height="${h}" fill="${GREEN}"/>`;
        }
    });

    volumeLines.forEach(([color, text]) => {
        svg += polyline(color, text);
    });

    for (let i = 12; i < volumes.length; i++) {
        const long = i === 22 || i === 48 || i === 74;
        svg += `<path d="M${dayX(i)} 231v${long ? 15 : 9}" stroke="${long ? '#777' : '#aaa'}" stroke-width="${long ? 3 : 2}"/>`;
    }
    svg += '<text class="date-text" x="5" y="281">20250731</text>';
    svg += '<text class="date-text" x="314" y="281" text-anchor="middle">20250901</text>';
    svg += '<text class="date-text" x="679" y="281" text-anchor="middle">20251015</text>';
    svg += '<text class="date-text" x="1043" y="281" text-anchor="end">20251120</text>';
    document.getElementById('volume').innerHTML = svg;
}

drawKline();
drawVolume();
```
